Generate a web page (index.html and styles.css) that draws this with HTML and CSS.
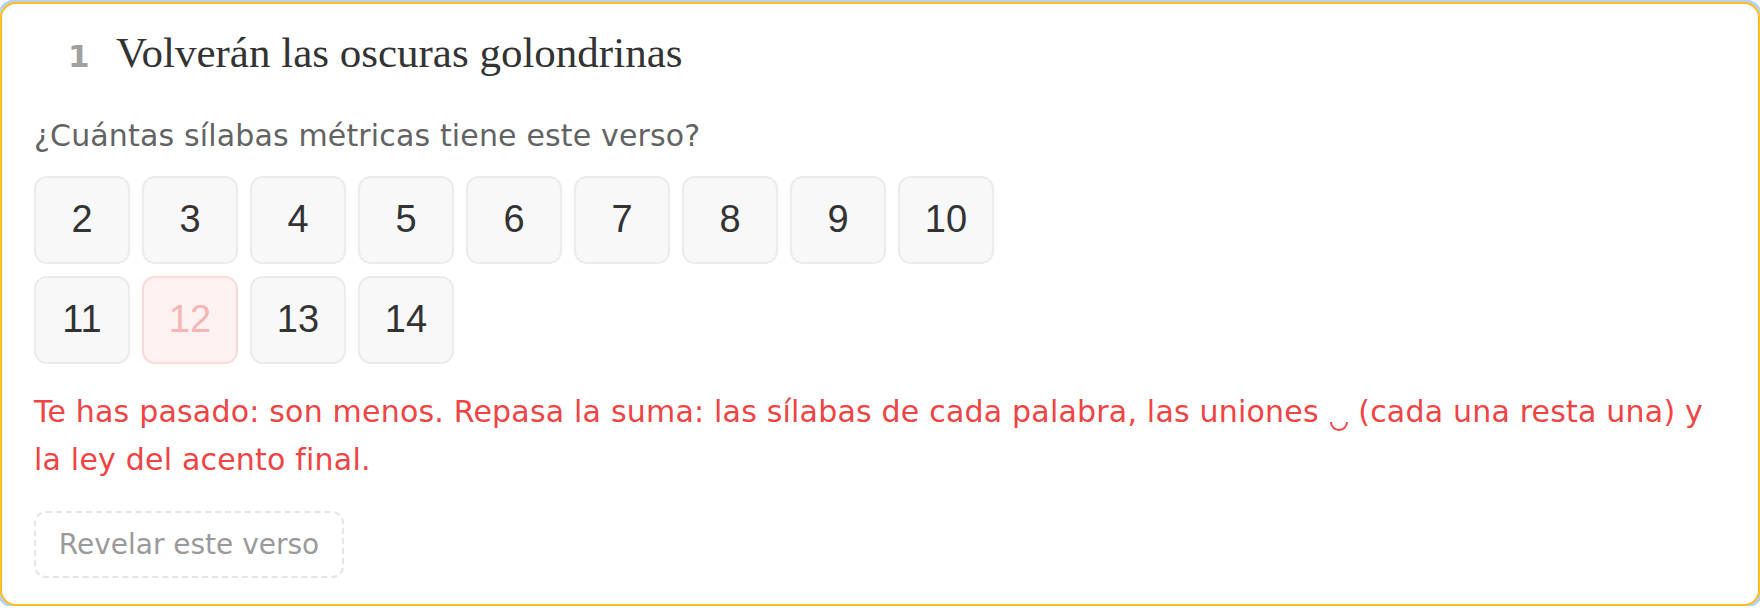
FILE: index.html
```html
<!DOCTYPE html>
<html lang="es">
<head>
<meta charset="utf-8">
<title>Verso 1</title>
<link rel="stylesheet" href="styles.css">
</head>
<body>
<section class="card">
  <header class="verse">
    <span class="verse-num">1</span>
    <h2 class="verse-text">Volverán las oscuras golondrinas</h2>
  </header>
  <p class="question">¿Cuántas sílabas métricas tiene este verso?</p>
  <div class="options">
    <button class="opt">2</button>
    <button class="opt">3</button>
    <button class="opt">4</button>
    <button class="opt">5</button>
    <button class="opt">6</button>
    <button class="opt">7</button>
    <button class="opt">8</button>
    <button class="opt">9</button>
    <button class="opt">10</button>
    <button class="opt">11</button>
    <button class="opt opt-wrong">12</button>
    <button class="opt">13</button>
    <button class="opt">14</button>
  </div>
  <p class="feedback">Te has pasado: son menos. Repasa la suma: las sílabas de cada palabra, las uniones <span class="tie">‿</span> (cada una resta una) y la ley del acento final.</p>
  <button class="reveal">Revelar este verso</button>
</section>
</body>
</html>
```

FILE: styles.css
```css
html, body {
  margin: 0;
  padding: 0;
  background: #ffffff;
}

body {
  padding-top: 2px;
  overflow: hidden;
}

.card {
  box-sizing: border-box;
  height: 604px;
  border: 2px solid #fbbf24;
  border-radius: 16px;
  box-shadow: 0 0 0 3px #bcd0ec;
  background: #ffffff;
  padding: 23px 32px 0 32px;
  font-family: "DejaVu Sans", "Open Sans", sans-serif;
}

.verse {
  display: flex;
  align-items: baseline;
  padding-left: 34px;
  line-height: 1.2;
}

.verse-num {
  width: 48px;
  flex: none;
  font-family: "DejaVu Sans", sans-serif;
  font-weight: 700;
  font-size: 31px;
  color: #a0a0a0;
}

.verse-text {
  margin: 0;
  font-family: "Liberation Serif", "Times New Roman", serif;
  font-weight: 400;
  font-size: 43px;
  color: #333333;
}

.question {
  margin: 33px 0 0;
  font-size: 30px;
  line-height: 48px;
  letter-spacing: 0.15px;
  color: #636363;
}

.options {
  margin-top: 16px;
  display: grid;
  grid-template-columns: repeat(9, 96px);
  grid-auto-rows: 88px;
  gap: 12px;
}

.opt {
  box-sizing: border-box;
  margin: 0;
  padding: 0;
  border: 2px solid #ebebeb;
  border-radius: 13px;
  background: #f8f8f8;
  font-family: "Liberation Sans", Arial, sans-serif;
  font-size: 38px;
  color: #333333;
}

.opt-wrong {
  background: #fdf1f1;
  border-color: #fcd9d9;
  color: #f5b5b5;
}

.feedback {
  margin: 24px 0 0;
  padding-right: 16px;
  font-size: 30px;
  line-height: 48px;
  letter-spacing: 0.2px;
  color: #ef4444;
}

.tie {
  position: relative;
  display: inline-block;
  width: 20px;
  height: 10px;
  overflow: hidden;
  vertical-align: -10px;
  font-size: 10px;
  line-height: 10px;
  color: transparent;
}

.tie::after {
  content: "";
  position: absolute;
  left: 1px;
  top: 0;
  box-sizing: border-box;
  width: 18px;
  height: 9px;
  border: 2px solid #ef4444;
  border-top: none;
  border-radius: 0 0 9px 9px / 0 0 9px 9px;
}

.reveal {
  box-sizing: border-box;
  display: block;
  margin-top: 27px;
  width: 310px;
  height: 67px;
  padding: 0;
  border: 2px dashed #e5e5e5;
  border-radius: 12px;
  background: #ffffff;
  font-family: "DejaVu Sans", "Open Sans", sans-serif;
  font-size: 28px;
  color: #9a9a9a;
}
```
